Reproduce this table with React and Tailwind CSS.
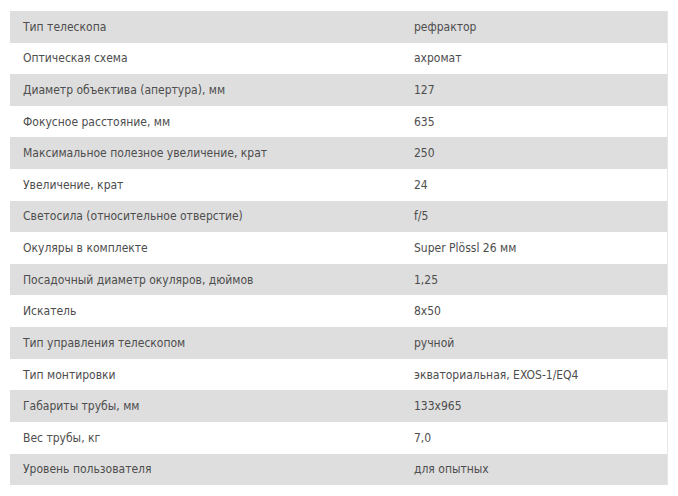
const specs = [
  ["Тип телескопа", "рефрактор"],
  ["Оптическая схема", "ахромат"],
  ["Диаметр объектива (апертура), мм", "127"],
  ["Фокусное расстояние, мм", "635"],
  ["Максимальное полезное увеличение, крат", "250"],
  ["Увеличение, крат", "24"],
  ["Светосила (относительное отверстие)", "f/5"],
  ["Окуляры в комплекте", "Super Plössl 26 мм"],
  ["Посадочный диаметр окуляров, дюймов", "1,25"],
  ["Искатель", "8x50"],
  ["Тип управления телескопом", "ручной"],
  ["Тип монтировки", "экваториальная, EXOS-1/EQ4"],
  ["Габариты трубы, мм", "133x965"],
  ["Вес трубы, кг", "7,0"],
  ["Уровень пользователя", "для опытных"],
];

export default function App() {
  return (
    <div className="min-h-screen bg-white pl-[10px] pt-[11px] font-['DejaVu_Sans_Condensed','DejaVu_Sans',sans-serif] text-[12px] text-[#4d4d4d]">
      <div className="w-[658px] border-r border-[#e6e6e6]">
        {specs.map(([label, value], i) => (
          <div
            key={label}
            className={`grid h-[31.62px] grid-cols-[404px_1fr] items-center ${
              i % 2 === 0 ? "bg-[#dedede]" : "bg-white"
            }`}
          >
            <div className="pl-[13px]">{label}</div>
            <div>{value}</div>
          </div>
        ))}
      </div>
    </div>
  );
}
